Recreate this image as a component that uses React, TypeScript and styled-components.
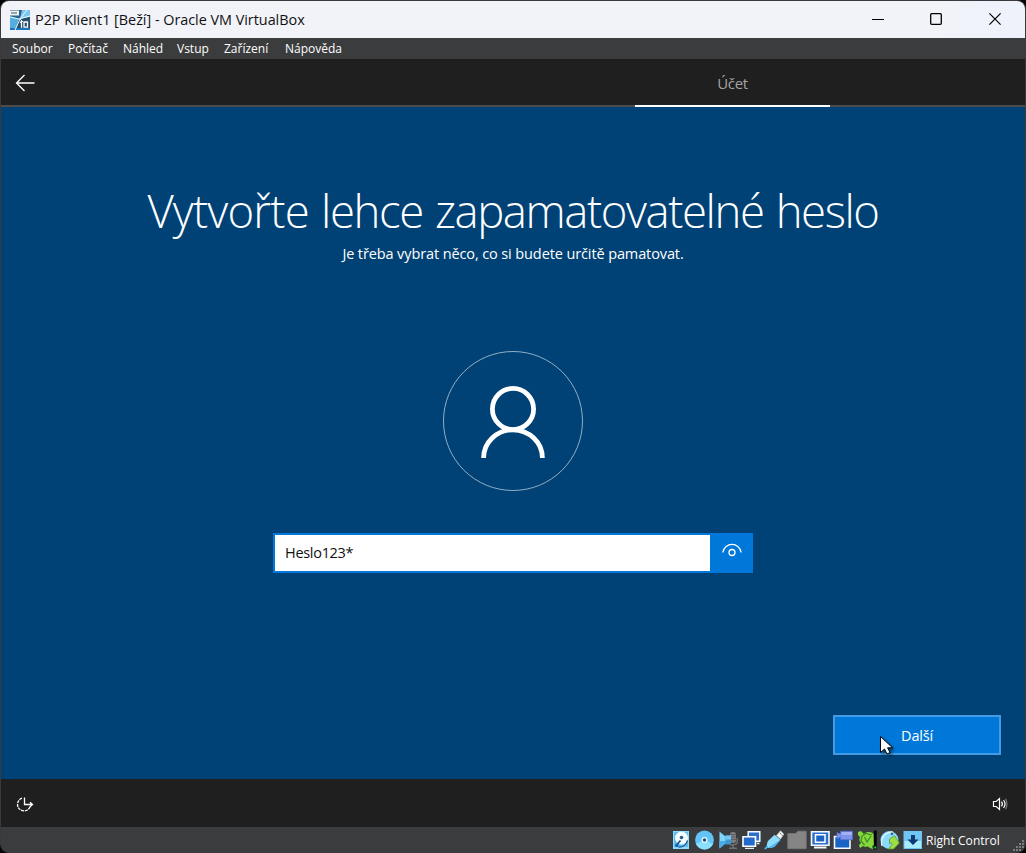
import React from 'react';
import styled, { createGlobalStyle } from 'styled-components';

const Global = createGlobalStyle`
  *, *::before, *::after { box-sizing: border-box; }
  html, body { margin: 0; padding: 0; background: #050505; }
  body { font-family: "Open Sans", "Noto Sans", sans-serif; overflow: hidden; }
  svg { display: block; flex: none; }
`;

const Frame = styled.div`
  width: 1026px;
  height: 853px;
  display: flex;
  flex-direction: column;
  border: 1px solid #3a3a3c;
  border-bottom: 0;
  border-radius: 9px;
  overflow: hidden;
  background: #1f1f1f;
`;

const TitleBar = styled.header`
  flex: none;
  height: 37px;
  display: flex;
  align-items: center;
  padding-left: 9px;
  background: linear-gradient(90deg, #f1f3f9 0 92%, #eef2fb);
`;

const Text = styled.span<{ $size: number; $spacing?: number; $color?: string }>`
  font-size: ${p => p.$size}px;
  line-height: 20px;
  letter-spacing: ${p => p.$spacing ?? 0}px;
  color: ${p => p.$color ?? '#fff'};
  font-stretch: 92%;
  white-space: nowrap;
`;

const WindowTitle = styled(Text)`
  margin-left: 5px;
  flex: 1;
`;

const WindowControls = styled.div`
  display: flex;
  align-self: flex-start;
  margin-right: 1px;
`;

const ControlButton = styled.div`
  width: 58.5px;
  height: 36px;
  display: grid;
  place-items: center;
`;

const MenuBar = styled.nav`
  flex: none;
  height: 21px;
  display: flex;
  align-items: center;
  gap: 15px;
  padding-left: 11px;
  background: #3b3c3e;
`;

const SetupHeader = styled.div`
  flex: none;
  height: 48px;
  display: flex;
  align-items: stretch;
  padding-left: 14px;
  border-bottom: 2px solid #4c4c4c;
  background: #1f1f1f;
`;

const BackButton = styled.div`
  width: 620px;
  padding-top: 15px;
`;

const ActiveTab = styled.div`
  width: 195px;
  height: 48px;
  display: flex;
  justify-content: center;
  padding-top: 14px;
  border-bottom: 2px solid #fff;
`;

const Page = styled.main`
  flex: none;
  height: 672px;
  display: flex;
  flex-direction: column;
  align-items: center;
  background: #004275;
`;

const Heading = styled.h1`
  margin: 72px 0 3px;
  height: 62px;
  font-size: 45.5px;
  line-height: 62px;
  font-weight: 300;
  font-stretch: 92%;
  font-kerning: none;
  letter-spacing: -1.42px;
  word-spacing: 1.8px;
  color: #fff;
  white-space: nowrap;
`;

const LeadWord = styled.span`
  letter-spacing: -0.8px;
`;

const Avatar = styled.div`
  width: 140px;
  height: 140px;
  margin-top: 87px;
`;

const PasswordField = styled.div`
  width: 480px;
  height: 40px;
  margin-top: 42px;
  display: flex;
  border: 2px solid #0078d9;
  background: #0078d9;
`;

const PasswordValue = styled.div`
  width: 435px;
  height: 36px;
  padding: 6px 0 0 10px;
  background: #fff;
`;

const RevealButton = styled.div`
  flex: 1;
  padding: 6px 0 0 12px;
`;

const Actions = styled.div`
  width: 100%;
  margin-top: 142px;
  padding-right: 24px;
  display: flex;
  justify-content: flex-end;
`;

const NextButton = styled.div`
  position: relative;
  width: 168px;
  height: 40px;
  display: flex;
  justify-content: center;
  padding-top: 9px;
  border: 2px solid #459be3;
  background: #0078d9;
`;

const Cursor = styled.svg`
  position: absolute;
  left: 44px;
  top: 18px;
  filter: drop-shadow(2px 2px 1.5px rgba(0, 0, 0, 0.5));
`;

const SetupFooter = styled.div`
  flex: none;
  height: 48px;
  display: flex;
  align-items: center;
  justify-content: space-between;
  padding: 2px 16px 0 14px;
  background: #1f1f1f;
`;

const StatusBar = styled.footer`
  flex: none;
  height: 26px;
  display: flex;
  align-items: center;
  justify-content: flex-end;
  background: #3b3c3e;
`;

const StatusIcons = styled.div`
  display: flex;
  gap: 3.2px;
`;

const HostKey = styled(Text)`
  width: 76px;
  margin: 1px 9px 0 3px;
`;

const Grip = styled.svg`
  align-self: flex-end;
`;

const menu: [string, number][] = [['Soubor', 41], ['Počítač', 40], ['Náhled', 39], ['Vstup', 32], ['Zařízení', 46], ['Nápověda', 56]];

const MenuItem = styled(Text)<{ $width: number }>`
  width: ${p => p.$width}px;
`;

const VmIcon = () => (
  <svg width="20" height="20" viewBox="0 0 20 20">
    <defs>
      <linearGradient id="vm" x2="0" y2="1"><stop stopColor="#315f80" /><stop offset="1" stopColor="#126fb8" /></linearGradient>
    </defs>
    <path d="M0 0h20v20H0z" fill="url(#vm)" />
    <path d="M12 0h8v7l-10 2z" fill="#7cc8ee" />
    <path d="M0 6l9 3-4 11H0z" fill="#56aee0" />
    <path d="M9 9l11-2v13H7z" fill="#2a4c6b" />
    <path d="M0 18h20v2H0z" fill="#1877c4" />
    <path d="M0 7l9 2 11-3M17 0L10 9 5 20M10 9l3 3" fill="none" stroke="#e9faff" strokeWidth="1" />
    <path d="M0 .5h9v5H0z" fill="#eef2f5" />
    <path d="M2 2v2M4 2v2M6 2v2" stroke="#4b5965" />
    <path d="M10 12.5l1.5-.8v6M14 12h3.5v5.2H14z" fill="none" stroke="#fff" strokeWidth="1.3" />
  </svg>
);

const StatusIcon = ({ kind }: { kind: string }) => (
  <svg width="20" height="20" viewBox="0 0 20 20">
    {kind === 'disk' && <>
      <rect x="2" y="1" width="16" height="18" fill="#8edcff" />
      <path d="M3 2h14v15H3z" fill="#5fbdf0" />
      <circle cx="10.5" cy="8" r="6.5" fill="#f5fcff" />
      <path d="M16.5 10.5C15 15.5 11 17.5 7.5 17" fill="none" stroke="#1a4f8c" strokeWidth="1.2" />
      <circle cx="10.5" cy="7.5" r="1.8" fill="#2a5c91" />
      <path d="M9.5 10.5L6 14.5" stroke="#164d87" strokeWidth="1.8" />
      <circle cx="5.8" cy="15.5" r="1.8" fill="#1662b0" />
    </>}
    {kind === 'disc' && <>
      <circle cx="10.5" cy="10" r="9.4" fill="#62c3f7" />
      <path d="M10.5 10L2 14a9.4 9.4 0 0 0 17 0z" fill="#8be0ff" />
      <circle cx="10.5" cy="10" r="3" fill="#e2f9ff" />
      <circle cx="10.5" cy="10" r="1.7" fill="#294b68" />
    </>}
    {kind === 'audio' && <>
      <rect x="12" y="2" width="6" height="11" rx="2.5" fill="#7c7d7f" />
      <path d="M19.3 8v4c0 3-4 3-7 3M15 14v4M11 18.3h8" fill="none" stroke="#6f7071" strokeWidth="1.5" />
      <path d="M12 4.5h6M12 7h6M12 9.5h6" stroke="#5a5b5d" strokeWidth=".8" />
      <path d="M1.5 1.5L8 7v6l-6.5 5.5z" fill="#7ed5fb" />
      <path d="M1.5 11H8v2l-6.5 5.5z" fill="#4aaee6" />
      <path d="M7.5 5.5H13v9H7.5z" fill="#3f97cf" />
      <path d="M7.5 5.5H13v4H7.5z" fill="#72c8f2" />
    </>}
    {kind === 'network' && <>
      <path d="M7.2 1.8h11.6v9.4H7.2z" fill="#2a6fce" stroke="#f4f8ff" strokeWidth="1.5" />
      <path d="M2 6.8h12.5v9.4H2z" fill="#226ace" stroke="#fff" strokeWidth="1.6" />
      <path d="M4 18.4h9M16 13.5h2.5" stroke="#e1edf7" strokeWidth="1.4" />
    </>}
    {kind === 'usb' && <>
      <path d="M12.5 5.5l4-4.7 3.4 3.4-3.4 4.8z" fill="#f6f6f6" stroke="#c4ccd0" strokeWidth=".6" />
      <path d="M15.8 3l1 .9M17.6 4.7l1 .8" stroke="#444" />
      <path d="M10.5 4.8l6 4.9-5.6 6.5c-2.3 2.2-4.5 1-6.8 1.8L2.2 17c1.3-2.3.3-5 2.8-7z" fill="#8cddff" />
      <path d="M16.5 9.7l-5.6 6.5c-2.3 2.2-4.5 1-6.8 1.8z" fill="#4fb4ee" />
      <path d="M.8 19l3-2.6" stroke="#49b5ef" strokeWidth="1.8" />
    </>}
    {kind === 'folder' && <path d="M.8 3.5h8l2-2.3h8.4v17.5H.8z" fill="#858585" stroke="#747474" />}
    {kind === 'display' && <>
      <path d="M1.5 1.8H19v13.4H1.5z" fill="#2b70cf" stroke="#f4f8ff" strokeWidth="1.6" />
      <path d="M5.5 4.8H15v7.4H5.5z" fill="#1b63c2" stroke="#fff" strokeWidth="1.5" />
      <path d="M4 17.5h12.5" stroke="#f4f8ff" strokeWidth="2" />
    </>}
    {kind === 'record' && <>
      <path d="M1.5 6.5H17v11.7H1.5z" fill="#1963c4" stroke="#f4f8ff" strokeWidth="1.6" />
      <path d="M4 2.5L7.5 4V1.2h12v8.6h-12V7L4 9z" fill="#7f93ea" stroke="#5269d1" strokeWidth=".7" />
      <path d="M8.5 2H19v3H8.5z" fill="#bac3fa" opacity=".6" />
    </>}
    {kind === 'cpu' && <>
      <path d="M1 2l3-1 3 3c3-3 8-2 9.5 0L17 15l-2 1 1 3-3-1-2-1.5c-3 .5-4 0-5-.5l-3 2-1-3 2-2C2 11 2 9 3 7L1 5z" fill="#86d83a" />
      <path d="M5 6l4-2.5 6 1.5M5 6l-1 5 3.5 4M7.5 7l2.5 5 4-6" fill="none" stroke="#3b8c24" strokeWidth="1.2" />
      <path d="M18.3.5v19" stroke="#050505" strokeWidth="2.8" />
      <path d="M18.3 16.5v2" stroke="#16ec31" strokeWidth="1.8" />
    </>}
    {kind === 'integration' && <>
      <circle cx="9.5" cy="10" r="9" fill="#8bd9fb" />
      <path d="M2 16C0 8 5 2 13 2" fill="none" stroke="#d6f4ff" strokeWidth="1.3" />
      <path d="M9.5 9l5-3.2 4.8 7.2-5.8 6H8.5l3.8-4.8-1.2-1.5-1.6 1z" fill="#9ddd45" stroke="#5d9e2b" strokeWidth=".8" />
      <circle cx="12" cy="3.7" r="1.2" fill="#315f80" />
    </>}
    {kind === 'host' && <>
      <path d="M.5 1H19v18H.5z" fill="#6fc6f5" />
      <path d="M1.5 11H18v7H1.5z" fill="#a8eafe" />
      <path d="M8 5h4v4.5h3.5L10 15 4.5 9.5H8z" fill="#0d3c70" />
    </>}
  </svg>
);

const statusKinds = ['disk', 'disc', 'audio', 'network', 'usb', 'folder', 'display', 'record', 'cpu', 'integration', 'host'];

export default function App() {
  return (
    <>
      <Global />
      <Frame>
        <TitleBar>
          <VmIcon />
          <WindowTitle $size={14.4} $spacing={-0.02} $color="#111">P2P Klient1 [Beží] - Oracle VM VirtualBox</WindowTitle>
          <WindowControls>
            <ControlButton><svg width="12" height="12"><path d="M0 6.5h12" stroke="#000" /></svg></ControlButton>
            <ControlButton><svg width="12" height="12"><rect x=".7" y=".7" width="10.6" height="10.6" rx="1" fill="none" stroke="#000" strokeWidth="1.3" /></svg></ControlButton>
            <ControlButton><svg width="12" height="12"><path d="M.4.4l11.2 11.2M11.6.4L.4 11.6" stroke="#000" strokeWidth="1.2" /></svg></ControlButton>
          </WindowControls>
        </TitleBar>
        <MenuBar>
          {menu.map(([label, width]) => <MenuItem key={label} $size={12} $width={width}>{label}</MenuItem>)}
        </MenuBar>
        <SetupHeader>
          <BackButton>
            <svg width="20" height="18"><path d="M19.5 9H1.5M9.5 1L1.5 9l8 8" fill="none" stroke="#fff" strokeWidth="1.3" /></svg>
          </BackButton>
          <ActiveTab><Text $size={15} $spacing={-0.3} $color="#a5a5a5">Účet</Text></ActiveTab>
        </SetupHeader>
        <Page>
          <Heading><LeadWord>Vytvořte</LeadWord> lehce zapamatovatelné heslo</Heading>
          <Text $size={14.5} $spacing={-0.11}>Je třeba vybrat něco, co si budete určitě pamatovat.</Text>
          <Avatar>
            <svg width="140" height="140" fill="none">
              <circle cx="70" cy="70" r="69.5" stroke="#92afc5" />
              <circle cx="70" cy="58" r="20.6" stroke="#fff" strokeWidth="4.8" />
              <path d="M40.6 107a29.4 28.2 0 0 1 58.8 0" stroke="#fff" strokeWidth="4.8" />
            </svg>
          </Avatar>
          <PasswordField>
            <PasswordValue><Text $size={14.5} $spacing={-0.3} $color="#111">Heslo123*</Text></PasswordValue>
            <RevealButton>
              <svg width="20" height="18" fill="none" stroke="#fff" strokeWidth="1.3"><path d="M.8 11.5C2.5.7 17.5.7 19.2 11.5" /><circle cx="10" cy="11.5" r="3" /></svg>
            </RevealButton>
          </PasswordField>
          <Actions>
            <NextButton>
              <Text $size={14.5} $spacing={-0.2}>Další</Text>
              <Cursor width="16" height="22"><path d="M1.5 1.5v16l4-3.5 2.5 5 3-1.5-2.4-4.7h5z" fill="#fff" stroke="#000" /></Cursor>
            </NextButton>
          </Actions>
        </Page>
        <SetupFooter>
          <svg width="20" height="18" fill="none" stroke="#fff" strokeWidth="1.3">
            <path d="M7 3.2A6.5 6.5 0 1 0 15.3 11" strokeDasharray="3 .8" />
            <path d="M9.5 2.5v7h8M15 7.2l2.5 2.3-2.5 2.3" />
          </svg>
          <svg width="17" height="16" fill="none" stroke="#fff" strokeWidth="1.2">
            <path d="M1.5 5.5h2.7l3.3-3v11l-3.3-3H1.5zM9.5 5.7q1.8 2.3 0 4.6M11.5 4q3.1 4 0 8" />
            <path d="M13.5 2.8q3 5.2 0 10.4" stroke="#777" />
          </svg>
        </SetupFooter>
        <StatusBar>
          <StatusIcons>{statusKinds.map(kind => <StatusIcon key={kind} kind={kind} />)}</StatusIcons>
          <HostKey $size={12} $spacing={0.05}>Right Control</HostKey>
          <Grip width="14" height="14" fill="#7c7d7f"><path d="M11 1h2v2h-2zM8 4h2v2H8zM11 4h2v2h-2zM5 7h2v2H5zM8 7h2v2H8zM11 7h2v2h-2zM2 10h2v2H2zM5 10h2v2H5zM8 10h2v2H8z" /></Grip>
        </StatusBar>
      </Frame>
    </>
  );
}
